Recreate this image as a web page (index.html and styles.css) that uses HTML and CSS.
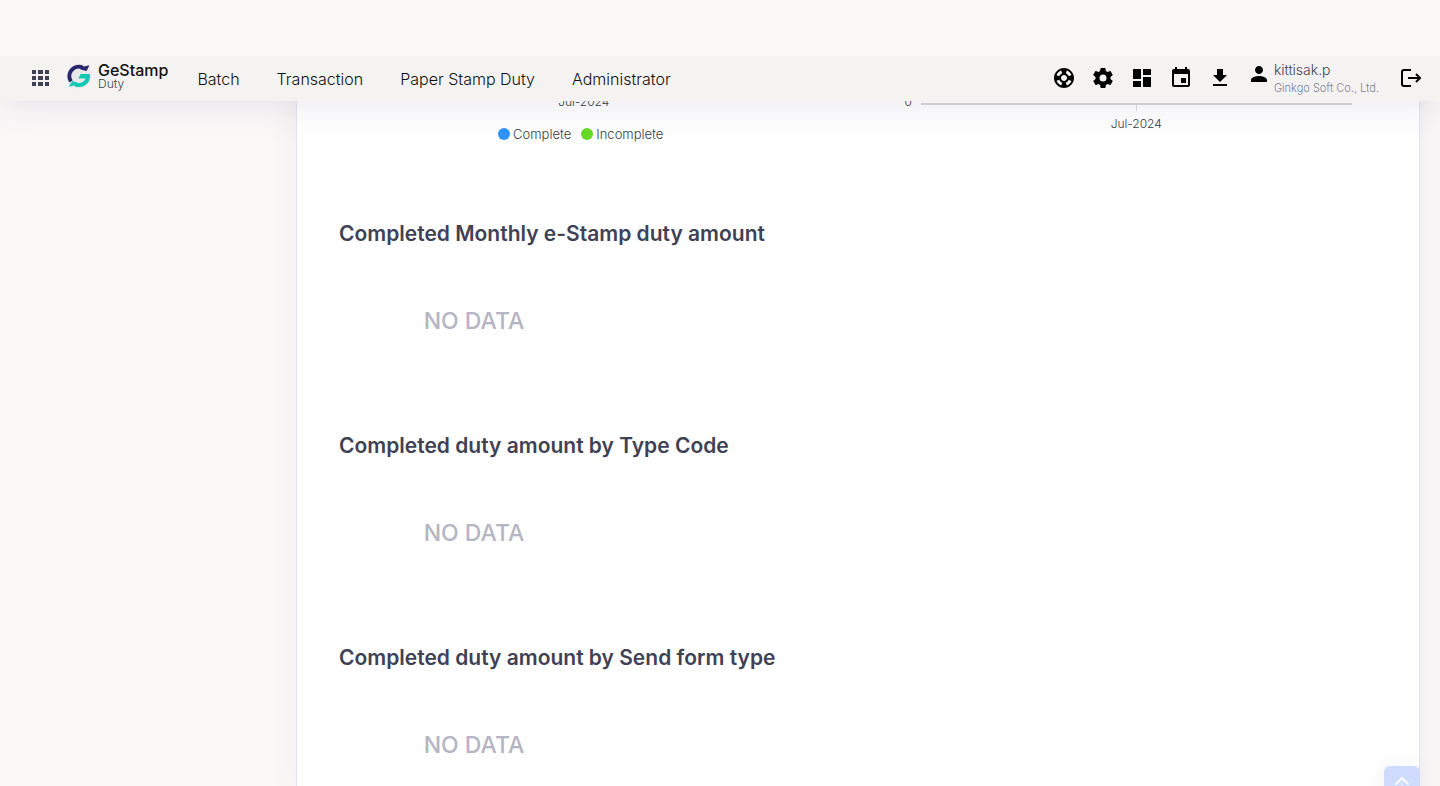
FILE: index.html
```html
<!DOCTYPE html>
<html lang="en">
<head>
<meta charset="utf-8">
<meta name="viewport" content="width=device-width, initial-scale=1">
<title>GeStamp Duty</title>
<link rel="stylesheet" href="styles.css">
</head>
<body>
<header class="top">
  <div class="bar">
    <button class="icon-btn apps" aria-label="Apps">
      <svg width="17" height="16" viewBox="0 0 17 16" fill="#3f4254"><path d="M0 0h4v4H0zM6 0h5v4H6zM13 0h4v4h-4zM0 6h4v4H0zM6 6h5v4H6zM13 6h4v4h-4zM0 12h4v4H0zM6 12h5v4H6zM13 12h4v4h-4z"/></svg>
    </button>
    <a class="brand" href="#">
      <svg width="26" height="26" viewBox="0 0 26 26">
        <circle cx="13" cy="13" r="12.500" fill="#e8e8ea"/>
        <path d="M5 18.500A9.500 9.500 0 0 1 16 4.200" fill="none" stroke="#29246b" stroke-width="4"/>
        <path d="M14.500 2.300L18 3.600 23.500 2.300 20.500 8 14.500 6.500Z" fill="#29246b"/>
        <path d="M22 12.500A9 9 0 0 1 9.500 21.300" fill="none" stroke="#0fc9b2" stroke-width="4"/>
        <path d="M14.500 11H24V14L20 15.500H12.500ZM2.500 23.800L6.500 18 12 20V23.500L8 22.500Z" fill="#0fc9b2"/>
      </svg>
      <span class="brand-text"><span class="brand-name">GeStamp</span><span class="brand-sub">Duty</span></span>
    </a>
    <nav class="menu">
      <a href="#">Batch</a><a href="#">Transaction</a><a href="#">Paper Stamp Duty</a><a href="#">Administrator</a>
    </nav>
    <div class="tools">
      <button class="icon-btn" aria-label="Support">
        <svg width="24" height="24" viewBox="0 0 24 24"><path d="M12 2C6.480 2 2 6.480 2 12s4.480 10 10 10 10-4.480 10-10S17.520 2 12 2zm7.460 7.120-2.780 1.150c-.51-1.360-1.580-2.440-2.950-2.940l1.150-2.780c2.100.8 3.770 2.470 4.580 4.570zM12 15c-1.660 0-3-1.340-3-3s1.340-3 3-3 3 1.340 3 3-1.340 3-3 3zM9.130 4.540l1.170 2.780c-1.380.5-2.470 1.590-2.980 2.970L4.540 9.130c.81-2.110 2.480-3.780 4.590-4.590zM4.540 14.870l2.780-1.150c.51 1.380 1.590 2.460 2.970 2.960l-1.170 2.780c-2.100-.81-3.770-2.480-4.580-4.590zm10.340 4.590-1.150-2.780c1.370-.51 2.450-1.590 2.950-2.970l2.780 1.170c-.81 2.100-2.480 3.770-4.580 4.580z"/></svg>
      </button>
      <button class="icon-btn" aria-label="Settings">
        <svg width="24" height="24" viewBox="0 0 24 24"><path d="M12 15.500A3.500 3.500 0 0 1 8.500 12 3.500 3.500 0 0 1 12 8.500a3.500 3.500 0 0 1 3.500 3.500 3.500 3.500 0 0 1-3.500 3.500m7.430-2.530c.04-.32.07-.64.07-.97s-.03-.66-.07-1l2.110-1.630c.19-.15.24-.42.12-.64l-2-3.460c-.12-.22-.39-.31-.61-.22l-2.490 1c-.52-.39-1.060-.73-1.690-.98l-.37-2.650A.506.506 0 0 0 14 2h-4c-.25 0-.46.18-.5.420l-.37 2.650c-.63.25-1.170.59-1.690.98l-2.490-1c-.22-.09-.49 0-.61.22l-2 3.460c-.13.22-.07.49.12.640L4.570 11c-.04.34-.07.67-.07 1s.03.65.07.970l-2.110 1.660c-.19.15-.25.42-.12.640l2 3.460c.12.22.39.3.61.22l2.490-1.010c.52.4 1.060.74 1.690.990l.37 2.650c.04.24.25.42.5.420h4c.25 0 .46-.18.5-.42l.37-2.650c.63-.26 1.170-.59 1.690-.99l2.490 1.010c.22.080.49 0 .61-.22l2-3.460c.12-.22.07-.49-.12-.64z"/></svg>
      </button>
      <button class="icon-btn" aria-label="Dashboard">
        <svg width="24" height="24" viewBox="0 0 24 24"><path d="M3 13h8V3H3v10zm0 8h8v-6H3v6zm10 0h8V11h-8v10zm0-18v6h8V3h-8z"/></svg>
      </button>
      <button class="icon-btn" aria-label="Calendar">
        <svg width="24" height="24" viewBox="0 0 24 24"><path d="M17 12h-5v5h5v-5zM16 1v2H8V1H6v2H5c-1.110 0-1.990.9-1.990 2L3 19c0 1.100.89 2 2 2h14c1.100 0 2-.9 2-2V5c0-1.100-.9-2-2-2h-1V1h-2zm3 18H5V8h14v11z"/></svg>
      </button>
      <button class="icon-btn" aria-label="Downloads">
        <svg width="24" height="24" viewBox="0 0 24 24"><path d="M19 9h-4V3H9v6H5l7 7 7-7zM5 18v2h14v-2H5z"/></svg>
      </button>
    </div>
    <div class="user">
      <svg width="24" height="24" viewBox="0 0 24 24"><path d="M12 12c2.210 0 4-1.790 4-4s-1.790-4-4-4-4 1.790-4 4 1.790 4 4 4zm0 2c-2.670 0-8 1.340-8 4v2h16v-2c0-2.660-5.330-4-8-4z"/></svg>
      <div class="user-text"><div class="user-name">kittisak.p</div><div class="user-org">Ginkgo Soft Co., Ltd.</div></div>
    </div>
    <button class="icon-btn" aria-label="Sign out">
      <svg width="24" height="24" viewBox="0 0 24 24" fill="none" stroke="#000" stroke-width="2"><path d="M12 4H5Q3 4 3 6V18Q3 20 5 20H12M9 12H21M17 8l4 4-4 4"/></svg>
    </button>
  </div>
</header>

<main class="card">
  <div class="charts">
    <div class="chart">
      <div class="tick-label plot-label">Jul-2024</div>
      <div class="legend">
        <span class="key"><i class="dot complete"></i>Complete</span>
        <span class="key"><i class="dot incomplete"></i>Incomplete</span>
      </div>
    </div>
    <div class="chart">
      <div class="axis"><span class="zero">0</span><div class="line"><i class="tick"></i></div></div>
      <div class="tick-label">Jul-2024</div>
    </div>
  </div>
  <section class="panel"><h2>Completed Monthly e-Stamp duty amount</h2><p class="empty">NO DATA</p></section>
  <section class="panel"><h2>Completed duty amount by Type Code</h2><p class="empty">NO DATA</p></section>
  <section class="panel"><h2>Completed duty amount by Send form type</h2><p class="empty">NO DATA</p></section>
</main>

<button class="to-top" aria-label="Scroll to top">
  <svg width="24" height="24" viewBox="0 0 24 24" fill="none" stroke="#fff" stroke-width="2" stroke-linecap="round" stroke-linejoin="round"><path d="M6 12l6-6 6 6"/><path d="M12 11v8" opacity=".4"/></svg>
</button>
</body>
</html>
```
FILE: styles.css
```css
* { box-sizing: border-box; }
body {
  margin: 0;
  height: 100vh;
  overflow: hidden;
  background: #faf9f8;
  color: #3f4254;
  font-family: Inter, "Open Sans", sans-serif;
}
a { color: inherit; text-decoration: none; }
svg { display: block; }
button { border: 0; background: none; padding: 0; cursor: pointer; }

.top {
  position: fixed;
  inset: 0 0 auto;
  z-index: 2;
  padding-top: 56px;
  background: #faf9f8;
  box-shadow: 0 0 40px rgba(82, 63, 105, 0.15);
}
.bar {
  display: flex;
  align-items: center;
  height: 45px;
  padding: 0 17px 0 32px;
  background: #f4f3f2;
}
.icon-btn { padding-bottom: 2px; }
.brand { display: flex; align-items: center; gap: 6px; margin-left: 17px; padding-bottom: 6px; }
.brand-text { display: flex; flex-direction: column; color: #111; }
.brand-name { font: 500 16px/16px Inter, sans-serif; }
.brand-sub { font: 300 12px/12px Inter, sans-serif; color: #444; }
.menu { display: flex; gap: 37px; margin-left: 29px; font-size: 16px; line-height: 24px; font-weight: 300; color: #111; }
.tools { display: flex; gap: 15px; margin-left: auto; }
.user { display: flex; gap: 3px; margin: 0 20px 0 15px; padding-bottom: 2px; }
.user > svg { margin-top: 2px; }
.user-text { font-weight: 300; white-space: nowrap; }
.user-name { font-size: 14px; line-height: 20px; }
.user-org { font-size: 11px; line-height: 16px; color: #7e8299; }

.card {
  margin: 0 20px 0 296px;
  height: 100vh;
  overflow: hidden;
  padding: 94px 41px 0 42px;
  background: #fff;
  border: solid #e4e6ef;
  border-width: 0 1px;
  box-shadow: 0 0 30px rgba(82, 63, 105, 0.07);
}
.charts { display: grid; grid-template-columns: 1fr 1fr; gap: 72px; height: 125px; font-size: 12px; font-weight: 300; line-height: 16px; color: #373d3f; }
.tick-label { text-align: center; }
.plot-label { padding-left: 6px; }
.legend { display: flex; justify-content: center; gap: 10px; margin-top: 16px; }
.key { display: flex; align-items: center; gap: 3px; font-size: 13px; }
.dot { width: 12px; height: 12px; border-radius: 50%; }
.complete { background: #2e93fa; }
.incomplete { background: #66da26; }
.axis { display: flex; height: 22px; padding-right: 26px; }
.zero { width: 26px; padding-left: 10px; }
.line { flex: 1; display: flex; justify-content: center; margin-top: 9px; border-top: 2px solid #d7d8dc; }
.tick { width: 1px; height: 6px; background: #d9dade; }

.panel { min-height: 212px; }
.panel h2 { margin: 0; font-size: 21px; line-height: 30px; font-weight: 600; }
.empty { width: 270px; margin: 54px 0 0; text-align: center; font-size: 23px; line-height: 36px; font-weight: 500; color: #b5b5c3; }

.to-top {
  position: fixed;
  right: 20px;
  bottom: -16px;
  display: grid;
  place-items: center;
  width: 36px;
  height: 36px;
  border-radius: 6px;
  background: #cfdcff;
  box-shadow: 0 0 20px rgba(82, 63, 105, 0.08);
}
```
